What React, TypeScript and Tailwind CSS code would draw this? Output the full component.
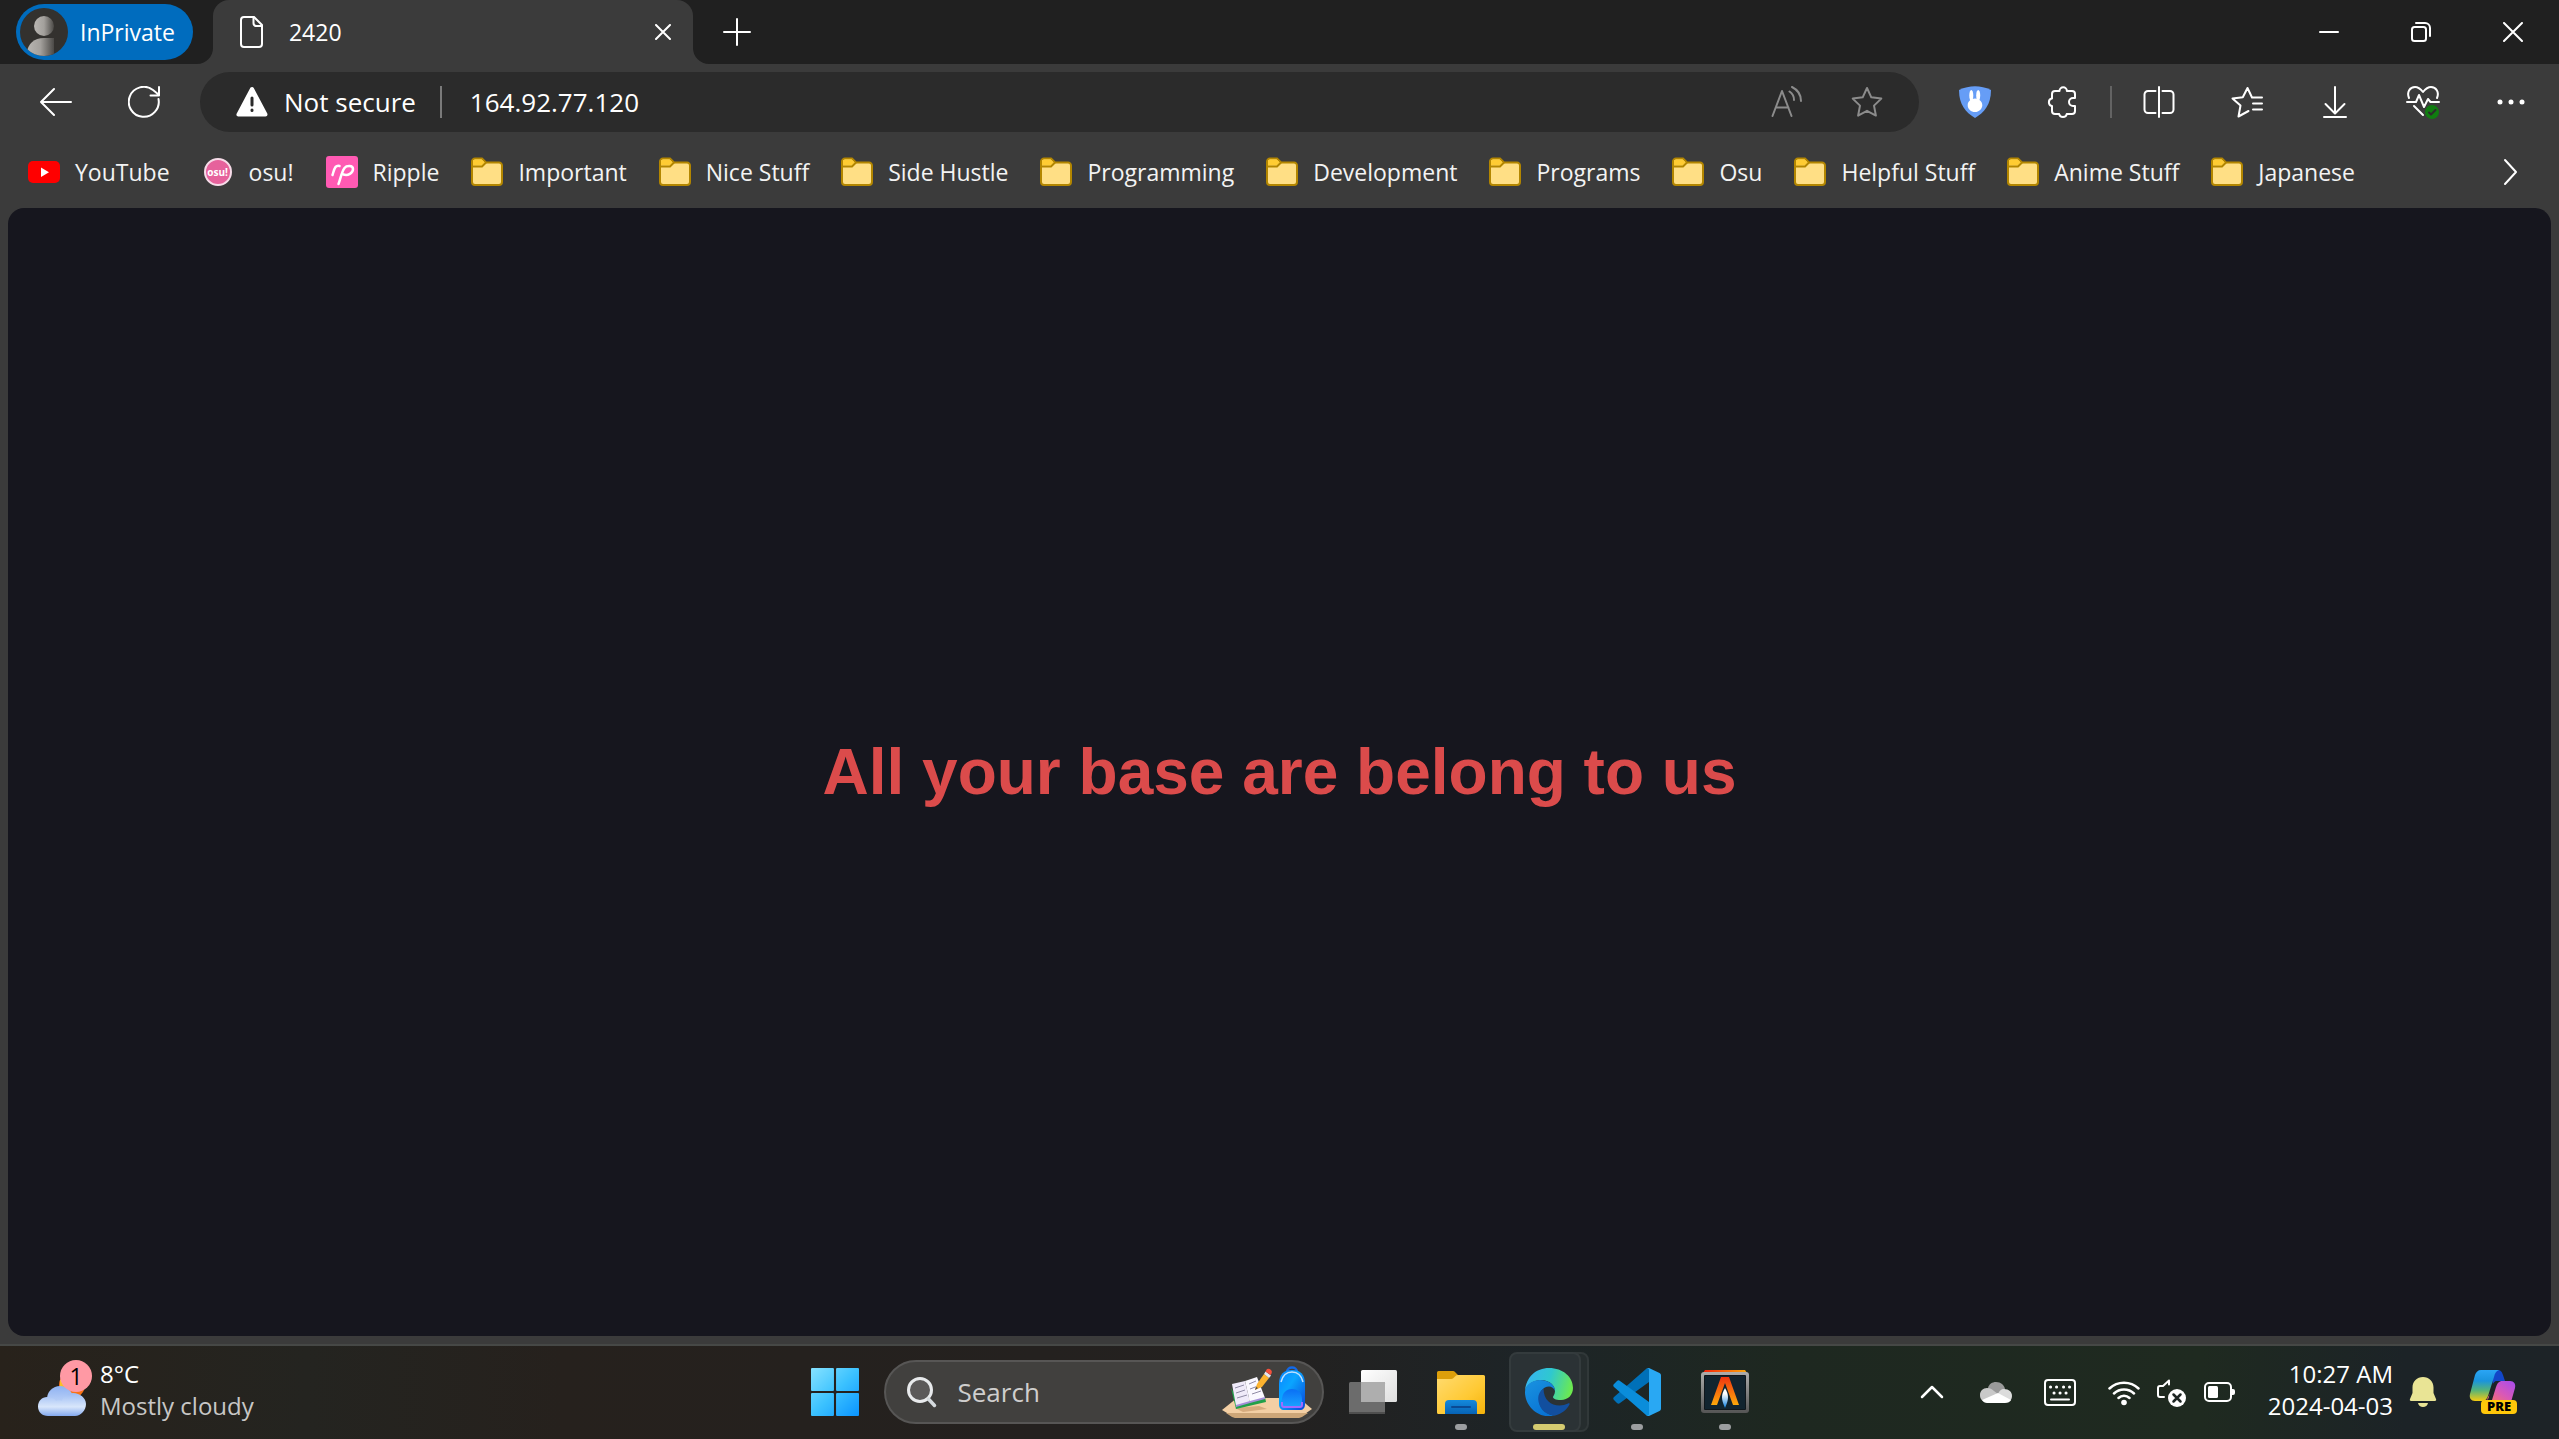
import type { ReactNode } from "react";

type IconProps = { className?: string; children: ReactNode; box?: string };

function Icon({ className = "size-8", children, box = "0 0 32 32" }: IconProps) {
  return (
    <svg
      viewBox={box}
      className={className}
      fill="none"
      stroke="currentColor"
      strokeWidth={2}
      strokeLinecap="round"
      strokeLinejoin="round"
      aria-hidden="true"
    >
      {children}
    </svg>
  );
}

function ToolButton({ label, className = "", children }: { label: string; className?: string; children: ReactNode }) {
  return (
    <button type="button" aria-label={label} className={`flex h-16 w-22 shrink-0 items-center justify-center ${className}`}>
      {children}
    </button>
  );
}

function Avatar() {
  return (
    <svg viewBox="0 0 48 48" className="size-12" aria-hidden="true">
      <defs>
        <linearGradient id="person" x1="0" x2="1" y1="0" y2="0">
          <stop offset="0" stopColor="#b9b6b2" />
          <stop offset="0.5" stopColor="#a3a09c" />
          <stop offset="1" stopColor="#4b4946" />
        </linearGradient>
        <clipPath id="avatarClip">
          <circle cx="24" cy="24" r="24" />
        </clipPath>
      </defs>
      <circle cx="24" cy="24" r="24" fill="#33312e" />
      <g clipPath="url(#avatarClip)" fill="url(#person)">
        <circle cx="24" cy="18" r="10" />
        <path d="M7 44C8 36 14 30 24 30h10v18H7z" />
      </g>
    </svg>
  );
}

function Folder() {
  return (
    <svg viewBox="0 0 32 32" className="size-8" aria-hidden="true">
      <path d="M1 5.500a3 3 0 0 1 3-3h7l4 4h13a3 3 0 0 1 3 3V26a3 3 0 0 1-3 3H4a3 3 0 0 1-3-3z" fill="#ffdf85" stroke="#b38600" strokeWidth="2" />
      <path d="M2 9.500V5.500a2 2 0 0 1 2-2h6.600l3 3-3 3z" fill="#ffcc33" />
      <path d="M2 10.500h9l4-4" fill="none" stroke="#b38600" strokeWidth="2" />
    </svg>
  );
}

function YouTube() {
  return (
    <svg viewBox="0 0 32 32" className="size-8" aria-hidden="true">
      <rect y="5" width="32" height="22" rx="5" fill="#ff0000" />
      <path d="M13 11.500v9.500l8-4.750z" fill="#fff" />
    </svg>
  );
}

function OsuBadge() {
  return (
    <span className="flex size-8 items-center justify-center">
      <span className="flex size-7 items-center justify-center rounded-full border-2 border-[#f6dbe8] bg-[#e6629c] text-[10px] leading-none font-bold text-white">
        osu!
      </span>
    </span>
  );
}

function RippleLogo() {
  return (
    <svg viewBox="0 0 32 32" className="size-8" aria-hidden="true">
      <rect width="32" height="32" rx="3" fill="#ff5ab3" />
      <path d="M6.500 19c1-3 1.500-6 3-8 1-1 2.500-1.500 4-1" fill="none" stroke="#fff" strokeWidth="2.500" strokeLinecap="round" />
      <path d="M12.500 28c2-5 3-12 6-16 2-2.500 8.500-3 8.500 1 0 4-5 7-9.500 5.500" fill="none" stroke="#fff" strokeWidth="2.500" strokeLinecap="round" />
    </svg>
  );
}

const bookmarks: { name: string; icon: ReactNode }[] = [
  { name: "YouTube", icon: <YouTube /> },
  { name: "osu!", icon: <OsuBadge /> },
  { name: "Ripple", icon: <RippleLogo /> },
  { name: "Important", icon: <Folder /> },
  { name: "Nice Stuff", icon: <Folder /> },
  { name: "Side Hustle", icon: <Folder /> },
  { name: "Programming", icon: <Folder /> },
  { name: "Development", icon: <Folder /> },
  { name: "Programs", icon: <Folder /> },
  { name: "Osu", icon: <Folder /> },
  { name: "Helpful Stuff", icon: <Folder /> },
  { name: "Anime Stuff", icon: <Folder /> },
  { name: "Japanese", icon: <Folder /> },
];

function TabStrip() {
  return (
    <header className="flex h-16 items-center bg-[#202020]">
      <button type="button" className="ml-4 flex h-14 items-center gap-3 rounded-full bg-[#006cbe] pr-[18px] pl-1 text-[23px] leading-8">
        <Avatar />
        InPrivate
      </button>
      <div className="relative ml-5 flex h-16 w-[480px] items-center rounded-t-2xl bg-[#3b3b3b] pr-4 pl-6">
        <svg viewBox="0 0 16 16" className="absolute bottom-0 -left-4 size-4" aria-hidden="true">
          <path d="M16 0v16H0A16 16 0 0 0 16 0z" fill="#3b3b3b" />
        </svg>
        <svg viewBox="0 0 16 16" className="absolute -right-4 bottom-0 size-4" aria-hidden="true">
          <path d="M0 0v16h16A16 16 0 0 1 0 0z" fill="#3b3b3b" />
        </svg>
        <Icon className="size-8">
          <path d="M7 1h10l8 8v19a3 3 0 0 1-3 3H7a3 3 0 0 1-3-3V4a3 3 0 0 1 3-3z" />
          <path d="M16.500 1v6a3 3 0 0 0 3 3H25" />
        </Icon>
        <span className="ml-5 flex-1 text-[23px] leading-8">2420</span>
        <button type="button" aria-label="Close tab" className="flex size-7 items-center justify-center">
          <Icon className="size-4" box="0 0 16 16"><path d="M1 1l14 14M15 1L1 15" /></Icon>
        </button>
      </div>
      <button type="button" aria-label="New tab" className="ml-6 flex size-10 items-center justify-center">
        <Icon className="size-7" box="0 0 28 28"><path d="M14 1v26M1 14h26" /></Icon>
      </button>
      <div className="ml-auto flex h-16 text-white">
        <button type="button" aria-label="Minimize" className="flex w-23 items-center justify-center">
          <Icon className="size-5" box="0 0 20 20"><path d="M1 10h18" /></Icon>
        </button>
        <button type="button" aria-label="Restore" className="flex w-23 items-center justify-center">
          <Icon className="size-5" box="0 0 20 20">
            <rect x="1" y="5" width="14" height="14" rx="2.500" />
            <path d="M5 1h9a5 5 0 0 1 5 5v8" />
          </Icon>
        </button>
        <button type="button" aria-label="Close" className="flex w-23 items-center justify-center">
          <Icon className="size-5" box="0 0 20 20"><path d="M1 1l18 18M19 1L1 19" /></Icon>
        </button>
      </div>
    </header>
  );
}

function Toolbar() {
  return (
    <nav className="flex h-19 items-center pr-1 pl-3" aria-label="Browser toolbar">
      <ToolButton label="Back">
        <Icon><path d="M1 16h30M14 3L1 16l13 13" /></Icon>
      </ToolButton>
      <ToolButton label="Refresh">
        <Icon>
          <path d="M30.500 13A15 15 0 1 1 25 4l5.500 4.500M31 1v8.500h-8.500" />
        </Icon>
      </ToolButton>
      <div className="ml-3 flex h-15 flex-1 items-center rounded-full bg-[#2b2b2b] pr-3 pl-9">
        <Icon className="size-8">
          <path d="M16 3L2.500 28.500h27z" fill="currentColor" strokeWidth={4} />
          <path d="M16 12v7M16 24v.5" stroke="#2b2b2b" strokeWidth={3} />
        </Icon>
        <label htmlFor="address" className="ml-4 text-[26px] leading-9">Not secure</label>
        <span className="ml-6 h-8 w-0.5 bg-[#7a7a7a]" />
        <input
          id="address"
          defaultValue="164.92.77.120"
          className="ml-7 h-9 min-w-0 flex-1 bg-transparent text-[26px] leading-9 text-white outline-none"
        />
        <button type="button" aria-label="Read aloud" className="flex w-20 justify-center text-[#8c8c8c]">
          <Icon>
            <path d="M1.500 30l9.500-25 9.500 25M5 21.500h12.500" />
            <path d="M18.500 5.500c3 2 4.500 4.500 4.500 8.500M21 1c6 3 9 8 9 14" />
          </Icon>
        </button>
        <button type="button" aria-label="Add to favorites" className="flex w-20 justify-center text-[#8c8c8c]">
          <Icon>
            <path d="M16 2l4.300 9.300 10 1.300-7.300 7 1.900 10L16 24.800l-8.900 4.800 1.900-10-7.300-7 10-1.300z" />
          </Icon>
        </button>
      </div>
      <div className="ml-3 flex items-center">
        <ToolButton label="VPN extension">
          <Icon>
            <path d="M0 4Q16-3.500 32 4c0 15-7 22.500-16 28C7 26.500 0 19 0 4z" fill="#669df6" stroke="none" />
            <ellipse cx="12.300" cy="9.500" rx="2" ry="5.500" fill="#fff" stroke="none" />
            <ellipse cx="19.200" cy="9.500" rx="2" ry="5.500" fill="#fff" stroke="none" />
            <path d="M16 12.500c4 0 7.300 3 7.300 6.700S20 26 16 26s-7.300-3-7.300-6.800 3.300-6.700 7.300-6.700z" fill="#fff" stroke="none" />
          </Icon>
        </ToolButton>
        <ToolButton label="Extensions">
          <Icon>
            <path d="M8 5h4.500a3.700 3.700 0 0 1 7.400 0H25a3 3 0 0 1 3 3v4h-2a4 4 0 0 0 0 8h2v5a3 3 0 0 1-3 3h-5.300c-.5 4-7 4-7.500 0H8a3 3 0 0 1-3-3v-5H4.500a4 4 0 0 1 0-7.500H5V8a3 3 0 0 1 3-3z" />
          </Icon>
        </ToolButton>
        <span className="mx-[3px] h-8 w-0.5 bg-[#636363]" />
        <ToolButton label="Split screen">
          <Icon>
            <path d="M16 1v30M12.500 5H5a3.500 3.500 0 0 0-3.500 3.500v15A3.500 3.500 0 0 0 5 27h7.500M19.500 5H27a3.500 3.500 0 0 1 3.500 3.500v15A3.500 3.500 0 0 1 27 27h-7.500" />
          </Icon>
        </ToolButton>
        <ToolButton label="Favorites">
          <Icon>
            <path d="M17.500 25L7.500 30.500l2-11-8-7 10.300-1.300L16.500 2l4.500 9.500h10M22 17.500h9M22 23.500h9" />
          </Icon>
        </ToolButton>
        <ToolButton label="Downloads">
          <Icon>
            <path d="M16 1v26M6.500 18L16 27.500 25.500 18M5 31h22" />
          </Icon>
        </ToolButton>
        <ToolButton label="Browser essentials">
          <Icon className="size-9" box="0 0 36 36">
            <path d="M4 14C1.500 8 5 3 10 3c4 0 6 2.500 8 5 2-2.500 4-5 8-5 5 0 8.500 5 6 11M2 18h9l3-7 5 12 4-8 2.500 3H34M9 22l9 9" />
            <circle cx="27" cy="28" r="7" fill="#107c10" stroke="none" />
            <path d="M24 28.500l2 2 4.500-4.500" stroke="#2b2b2b" />
          </Icon>
        </ToolButton>
        <ToolButton label="Settings and more">
          <Icon>
            <g fill="currentColor" stroke="none">
              <circle cx="5" cy="16" r="2.500" />
              <circle cx="16" cy="16" r="2.500" />
              <circle cx="27" cy="16" r="2.500" />
            </g>
          </Icon>
        </ToolButton>
      </div>
    </nav>
  );
}

function BookmarkBar() {
  return (
    <nav className="flex h-17 items-center gap-8 px-7 pb-1" aria-label="Favorites bar">
      {bookmarks.map((b) => (
        <a key={b.name} href="#" className="flex shrink-0 items-center gap-[15px] text-[23px] leading-8 text-[#f3f3f3]">
          {b.icon}
          {b.name}
        </a>
      ))}
      <button type="button" aria-label="More favorites" className="ml-auto flex w-10 justify-center">
        <Icon className="size-7" box="0 0 28 28"><path d="M8 2l11 12L8 26" /></Icon>
      </button>
    </nav>
  );
}

function Weather() {
  return (
    <button type="button" className="flex items-center gap-3 pb-1 pl-9 text-left">
      <span className="relative">
        <svg viewBox="0 0 52 60" className="h-15 w-13" aria-hidden="true">
          <defs>
            <linearGradient id="cloudBack" x1="0" x2="0" y1="0" y2="1">
              <stop offset="0" stopColor="#8fb2f2" />
              <stop offset="1" stopColor="#d5e3fa" />
            </linearGradient>
            <linearGradient id="cloudFront" x1="0" x2="0" y1="0" y2="1">
              <stop offset="0" stopColor="#9dbcf3" />
              <stop offset="0.600" stopColor="#d8e6fb" />
              <stop offset="1" stopColor="#84a9ee" />
            </linearGradient>
          </defs>
          <circle cx="36" cy="25" r="13" fill="#f97316" />
          <path d="M24 20h8v8h-8z" fill="#fbbf24" />
          <circle cx="24" cy="39" r="13" fill="url(#cloudBack)" />
          <path d="M11 37c4 0 7 1 9 4 2-1 4-1 6 0 1-5 6-8 11-8 7 0 13 5 13 11s-5 12-11 12H12c-6 0-10-4-10-9.500S6 37 11 37z" fill="url(#cloudFront)" />
        </svg>
        <span className="absolute top-0 right-0 -mr-1 flex size-8 items-center justify-center rounded-full bg-[#ff99a4] text-[23px] leading-8 text-black">
          1
        </span>
      </span>
      <span className="flex flex-col text-[24px] leading-8">
        <span className="text-white">8°C</span>
        <span className="text-[#c8c7c6]">Mostly cloudy</span>
      </span>
    </button>
  );
}

function SearchArt() {
  return (
    <svg viewBox="0 0 90 52" className="h-13 w-[90px]" aria-hidden="true">
      <defs>
        <linearGradient id="bag" x1="0" x2="1" y1="0" y2="1">
          <stop offset="0" stopColor="#0a84ff" />
          <stop offset="0.400" stopColor="#0aa5ff" />
          <stop offset="1" stopColor="#0b46d8" />
        </linearGradient>
        <linearGradient id="pocket" x1="0" x2="0" y1="0" y2="1">
          <stop offset="0" stopColor="#0a6ff5" />
          <stop offset="1" stopColor="#1aa3ff" />
        </linearGradient>
      </defs>
      <path d="M0 44l15-12h62l13 11-10 7c-2 1-4 2-7 2H17c-3 0-5-1-7-2z" fill="#f3cfa4" />
      <path d="M4 47h82l-6 4c-2 1-4 1-7 1H17c-3 0-5 0-7-1z" fill="#cda678" />
      <path d="M13 42l24-2 8 3-24 3z" fill="#d6ab7e" />
      <path d="M9 22l5 21 30-7-1-5-26 5z" fill="#21a04a" />
      <path d="M10 18l4 22 14-4-5-21z" fill="#efeaf9" />
      <path d="M23 15l12-4 8 21-15 4z" fill="#faf8ff" />
      <path d="M14 39l14-4 15-4v2l-15 4-14 4z" fill="#a48ed8" />
      <path d="M13 22l9-3M14 27l9-3M15 32l10-3M27 18l7-3M28 23l8-3M30 28l9-3" stroke="#8f8aa5" strokeWidth="1" />
      <path d="M33 24l2-6 7-10 5 4-7 9z" fill="#fcb22e" />
      <path d="M42 8l1.500-2.500 5.500 4L47 12z" fill="#e6e6ee" />
      <path d="M43.500 5.500L45 3q2-1 4 1t-.5 5z" fill="#f4503c" />
      <path d="M33 24l1-3 2 1z" fill="#444" />
      <path d="M65 6c0-6 10-6 10 0" fill="none" stroke="#1269e8" strokeWidth="2.500" />
      <path d="M57 18C57 8 62 4 70 4s13 4 13 14v20c0 4-2 6-5 6H62c-3 0-5-2-5-6z" fill="url(#bag)" />
      <path d="M59 16c2-8 6-10 11-10s9 2 11 10" fill="none" stroke="#bfe0ff" strokeWidth="1.500" />
      <path d="M60 34c0-7 4-11 10-11s10 4 10 11v5c0 1-1 2-2 2H62c-1 0-2-1-2-2z" fill="url(#pocket)" />
      <path d="M60 36v3c0 1 1 2 2 2h16c1 0 2-1 2-2v-3" fill="none" stroke="#a06bff" strokeWidth="2" />
    </svg>
  );
}

function TaskButton({ label, children, mark }: { label: string; children: ReactNode; mark?: boolean }) {
  return (
    <button type="button" aria-label={label} className="relative flex h-20 w-22 items-center justify-center">
      {children}
      {mark && <span className="absolute bottom-0.5 left-1/2 -ml-1.5 h-1.5 w-3 rounded-full bg-[#9c9ea0]" />}
    </button>
  );
}

function Launcher() {
  return (
    <div className="flex items-center">
      <TaskButton label="Start">
        <svg viewBox="0 0 46 46" className="size-12" aria-hidden="true">
          <defs>
            <linearGradient id="win" gradientUnits="userSpaceOnUse" x1="0" y1="0" x2="46" y2="46">
              <stop offset="0" stopColor="#86e2ff" />
              <stop offset="0.500" stopColor="#3cc2ff" />
              <stop offset="1" stopColor="#0a94ff" />
            </linearGradient>
          </defs>
          <g fill="url(#win)">
            <rect width="22" height="22" rx="1" />
            <rect x="24" width="22" height="22" rx="1" />
            <rect y="24" width="22" height="22" rx="1" />
            <rect x="24" y="24" width="22" height="22" rx="1" />
          </g>
        </svg>
      </TaskButton>
      <div className="mx-[5px] flex h-16 w-[440px] items-center rounded-full border-2 border-[#575655] bg-[#41403e] pr-2.5 pl-5">
        <svg viewBox="0 0 32 32" className="size-8" fill="none" aria-hidden="true">
          <circle cx="14" cy="14" r="11.500" fill="#5b5959" stroke="#e8eaec" strokeWidth="3" />
          <path d="M22.500 23l6 6.500" stroke="#d5dade" strokeWidth="3.500" strokeLinecap="round" />
        </svg>
        <input
          aria-label="Search"
          placeholder="Search"
          className="ml-5 h-10 min-w-0 flex-1 bg-transparent text-[26px] leading-10 outline-none placeholder:text-[#cfcecd]"
        />
        <SearchArt />
      </div>
      <TaskButton label="Task view">
        <svg viewBox="0 0 48 48" className="size-12" aria-hidden="true">
          <defs>
            <linearGradient id="pane" x1="0" x2="1" y1="0" y2="1">
              <stop offset="0" stopColor="#ffffff" />
              <stop offset="1" stopColor="#dedede" />
            </linearGradient>
          </defs>
          <rect x="12" y="2" width="36" height="32" rx="1.500" fill="url(#pane)" />
          <rect x="0" y="14" width="36" height="32" rx="1.500" fill="#6c6c6c" />
          <path d="M12 14h24v20H12z" fill="#aeaeae" />
          <path d="M0 44h36v.5a1.500 1.500 0 0 1-1.500 1.500h-33A1.500 1.500 0 0 1 0 44.500z" fill="#4f4f4f" />
        </svg>
      </TaskButton>
      <TaskButton label="File Explorer" mark>
        <svg viewBox="0 0 48 48" className="size-12" aria-hidden="true">
          <defs>
            <linearGradient id="folderFront" x1="0" x2="1" y1="0" y2="1">
              <stop offset="0" stopColor="#ffdb70" />
              <stop offset="0.600" stopColor="#ffc933" />
              <stop offset="1" stopColor="#f5b20a" />
            </linearGradient>
            <linearGradient id="folderBase" x1="0" x2="0" y1="0" y2="1">
              <stop offset="0" stopColor="#1489dc" />
              <stop offset="1" stopColor="#0763b5" />
            </linearGradient>
          </defs>
          <path d="M0 4.500A1.500 1.500 0 0 1 1.500 3h14c1 0 2 .3 2.500 1l3 3v6H0z" fill="#dd9f0a" />
          <path d="M0 11h13c2 0 3-.5 4-1.500s2-2.500 4-2.500h25.500A1.500 1.500 0 0 1 48 8.500v36a1.500 1.500 0 0 1-1.500 1.500h-45A1.500 1.500 0 0 1 0 44.500z" fill="url(#folderFront)" />
          <path d="M8 46V36a4 4 0 0 1 4-4h24a4 4 0 0 1 4 4v10z" fill="url(#folderBase)" />
          <path d="M15 39h18" stroke="#0a4a94" strokeWidth="2" strokeLinecap="round" />
        </svg>
      </TaskButton>
      <button type="button" aria-label="Microsoft Edge" className="relative flex h-20 w-22 items-center justify-center">
        <span className="absolute inset-y-0 right-1 left-2 rounded-lg border-2 border-[#313839] bg-[#262d2e]" />
        <span className="absolute inset-y-0 right-3 left-1 rounded-lg border-2 border-[#343b3d] bg-[#2b3235]" />
        <svg viewBox="0 0 48 48" className="relative size-12" aria-hidden="true">
          <defs>
            <linearGradient id="edgeTop" x1="0" x2="1" y1="0.300" y2="0.500">
              <stop offset="0" stopColor="#36b4f2" />
              <stop offset="0.500" stopColor="#2fc8cf" />
              <stop offset="1" stopColor="#6cea4f" />
            </linearGradient>
            <linearGradient id="edgeMid" x1="0" x2="0.600" y1="0" y2="1">
              <stop offset="0" stopColor="#1a93e0" />
              <stop offset="1" stopColor="#0873d4" />
            </linearGradient>
          </defs>
          <path d="M0 23C1 9 11 0 24 0c14 0 24 9 24 20 0 7-5 12-12 12-6 0-8-1.500-8-3 0-1 2-2.500 2-6 0-6-6-11-14-11C8 12 1 17 0 23z" fill="url(#edgeTop)" />
          <path d="M0 24c0-7 7-12 15-12 9 0 15 5 15 11-1-3-3.500-4.500-6-4.500-6 0-10 6-10 12.500 0 10 8 16 17 17-2 .2-4 .3-7 .3C11 48.300 0 37 0 24z" fill="url(#edgeMid)" />
          <path d="M18.500 20.500c-4 3-6 7-5 13C15 42 22 47.500 30 47.500c7-2 12-6 14.500-11 .5-1-.5-1.500-1.500-1-2.500 1.200-5.500 2-8.500 2-8.500 0-16-5.500-16-17z" fill="#124f9f" />
        </svg>
        <span className="absolute bottom-0.5 left-1/2 -ml-4 h-1.5 w-8 rounded-full bg-[#d5cb70]" />
      </button>
      <TaskButton label="Visual Studio Code" mark>
        <svg viewBox="0 0 48 48" className="size-12" aria-hidden="true">
          <path d="M36 0v14L7 35c-1 1-2 1-3 0l-3-3c-1-1-1-2 0-3L33 1c1-1 2-1 3-1z" fill="#0070b8" />
          <path d="M36 48V34L7 13c-1-1-2-1-3 0l-3 3c-1 1-1 2 0 3l32 28c1 1 2 1 3 1z" fill="#0a8ddb" />
          <path d="M36 0l10.500 5c1 .5 1.500 1.500 1.500 2.500v33c0 1-.5 2-1.500 2.500L36 48c-1 .4-2 .2-3-.8 1.500 1 3 .3 3-1.200V2c0-1.500-1.500-2.200-3-1.200 1-1 2-1.200 3-.8z" fill="#29a8f3" />
        </svg>
      </TaskButton>
      <TaskButton label="Alacritty" mark>
        <svg viewBox="0 0 48 48" className="size-12" aria-hidden="true">
          <defs>
            <linearGradient id="flameBar" x1="0" x2="1" y1="0" y2="0">
              <stop offset="0" stopColor="#f4220c" />
              <stop offset="1" stopColor="#fba80c" />
            </linearGradient>
            <linearGradient id="flameA" x1="0" x2="0" y1="0" y2="1">
              <stop offset="0" stopColor="#f03510" />
              <stop offset="1" stopColor="#fca80a" />
            </linearGradient>
            <linearGradient id="frame" x1="0" x2="0" y1="0" y2="1">
              <stop offset="0" stopColor="#adadad" />
              <stop offset="1" stopColor="#555555" />
            </linearGradient>
            <linearGradient id="jet" x1="0" x2="0" y1="0" y2="1">
              <stop offset="0.300" stopColor="#ffffff" />
              <stop offset="1" stopColor="#0a7fe0" />
            </linearGradient>
          </defs>
          <path d="M4 2h40l2 3H2z" fill="url(#flameBar)" />
          <rect y="4" width="48" height="41" rx="3" fill="url(#frame)" />
          <rect x="3" y="7" width="42" height="35" rx="1" fill="#10171c" />
          <rect x="4" y="8" width="40" height="33" fill="#12242f" />
          <path d="M20 9h8l10 28h-6l-8-22-8 22h-6z" fill="url(#flameA)" />
          <path d="M24 20c4 7 4 11 0 20-4-9-4-13 0-20z" fill="url(#jet)" />
        </svg>
      </TaskButton>
    </div>
  );
}

function Tray() {
  return (
    <div className="flex items-center justify-end pr-10 text-white">
      <button type="button" aria-label="Show hidden icons" className="flex h-16 w-16 items-center justify-center">
        <Icon className="size-6" box="0 0 24 24"><path d="M2 17L12 7l10 10" strokeWidth={2.5} /></Icon>
      </button>
      <button type="button" aria-label="OneDrive" className="flex h-16 w-16 items-center justify-center">
        <Icon>
          <g stroke="none">
            <path d="M8 12c1-4 4-6 8-6 5 0 8 3 9 7l-5 6-12-4z" fill="#9a9a9a" />
            <path d="M7 12c3 0 5 1 7 3l4 3-12 8c-4-1-6-3-6-7s3-7 7-7z" fill="#c9c9c9" />
            <path d="M24 13c5 0 8 3 8 7 0 2-1 4-2 5l-12-7c1-3 3-5 6-5z" fill="#dcdcdc" />
            <path d="M18 17l13 7c-1 2-3 3-6 3H7c-2 0-4-1-5-3z" fill="#ffffff" />
          </g>
        </Icon>
      </button>
      <button type="button" aria-label="Touch keyboard" className="flex h-16 w-16 items-center justify-center">
        <Icon>
          <rect x="1" y="4" width="30" height="25" rx="3" />
          <path d="M7 23.500h18" />
          <path d="M6.500 11h.1M12.500 11h.1M19.500 11h.1M25.500 11h.1M10 17h.1M16 17h.1M22 17h.1" strokeWidth={3} />
        </Icon>
      </button>
      <button type="button" aria-label="Network, volume and battery" className="flex h-16 items-center gap-4 pr-8 pl-4">
        <Icon>
          <path d="M1.500 12.500a21 21 0 0 1 29 0M6 17.500a14.500 14.500 0 0 1 20 0M10.500 22a8 8 0 0 1 11 0" strokeWidth={2.5} />
          <circle cx="16" cy="26.500" r="2.800" fill="currentColor" stroke="none" />
        </Icon>
        <Icon>
          <path d="M13 8.500V4.500L7 10H4a2 2 0 0 0-2 2v7a2 2 0 0 0 2 2h4" />
          <circle cx="21" cy="22" r="9" fill="currentColor" stroke="none" />
          <path d="M17.500 18.500l7 7M24.500 18.500l-7 7" stroke="#1e2624" strokeWidth={2.500} />
        </Icon>
        <Icon>
          <rect x="1" y="7" width="26" height="18" rx="4" />
          <rect x="4" y="10" width="10" height="12" rx="1.500" fill="currentColor" stroke="none" />
          <path d="M28 13h1a2 2 0 0 1 2 2v2a2 2 0 0 1-2 2h-1z" fill="currentColor" stroke="none" />
        </Icon>
      </button>
      <button type="button" aria-label="Date and time" className="flex flex-col items-end pb-1 text-[24px] leading-8">
        <span>10:27 AM</span>
        <span>2024-04-03</span>
      </button>
      <button type="button" aria-label="Notifications" className="ml-3.5 flex h-16 w-8 items-center justify-center">
        <Icon>
          <path d="M16 1c6 0 10.500 4.500 10.500 10.500V17l2.500 6c.5 1 0 2-1.200 2H4.200C3 25 2.500 24 3 23l2.500-6v-5.500C5.500 5.500 10 1 16 1zM11 27h10c-.5 2.500-2.500 4-5 4s-4.500-1.500-5-4z" fill="#e9e495" stroke="none" />
        </Icon>
      </button>
      <button type="button" aria-label="Copilot" className="relative ml-7 flex size-13 items-center justify-center">
        <svg viewBox="0 0 48 48" className="size-12" aria-hidden="true">
          <defs>
            <linearGradient id="ribbonLeft" x1="0" x2="0" y1="0" y2="1">
              <stop offset="0" stopColor="#2aa5f5" />
              <stop offset="0.350" stopColor="#1a94dd" />
              <stop offset="0.650" stopColor="#54b37a" />
              <stop offset="1" stopColor="#f5cb10" />
            </linearGradient>
            <linearGradient id="ribbonRight" x1="1" x2="0" y1="0" y2="1">
              <stop offset="0" stopColor="#a64cf0" />
              <stop offset="0.500" stopColor="#d858b8" />
              <stop offset="1" stopColor="#ff7a50" />
            </linearGradient>
          </defs>
          <path d="M22 2h6c4 0 5 2 6 5l2 6h-6c-4 0-5 1-6 4z" fill="#1246c8" />
          <path d="M12 2h18c-3 1-4 3-5 7l-6 19c-1 3-3 5-6 5H6c-4 0-6-3-5-7L6 7c1-3 3-5 6-5z" fill="url(#ribbonLeft)" />
          <path d="M32 13h9c4 0 6 3 5 7l-4 14H14c3-1 4-2 5-5l7-11c1-3 3-5 6-5z" fill="url(#ribbonRight)" />
          <path d="M28 13h4c-3 1-4 3-5 6l-4 13h-5c1-1 2-2 2-4l4-12c1-2 2-3 4-3z" fill="#1d2327" />
        </svg>
        <span className="absolute right-0.5 bottom-1 flex h-3.5 w-9 items-center justify-center rounded-sm bg-[#ffc70a] text-[13px] leading-none font-extrabold text-black">
          PRE
        </span>
      </button>
    </div>
  );
}

export default function App() {
  return (
    <div className="flex h-screen min-w-0 flex-col overflow-hidden bg-[#3b3b3b] font-['Open_Sans',sans-serif] text-white">
      <TabStrip />
      <Toolbar />
      <BookmarkBar />
      <main className="mx-2 mb-2 flex flex-1 items-center justify-center rounded-2xl bg-[#16161e]">
        <h1 className="text-center font-['Liberation_Sans',sans-serif] text-[64px] leading-[74px] font-bold text-[#db4b4b]">
          All your base are belong to us
        </h1>
      </main>
      <footer className="grid h-[95px] grid-cols-[1fr_auto_1fr] items-center border-t-2 border-[#464846] bg-[linear-gradient(90deg,#28221b_0%,#242420_12%,#26211d_22%,#232120_50%,#1d2427_60%,#1e2820_70%,#1f2a20_86%,#1c2327_94%,#1d2327_100%)] pb-0.5">
        <Weather />
        <Launcher />
        <Tray />
      </footer>
    </div>
  );
}
